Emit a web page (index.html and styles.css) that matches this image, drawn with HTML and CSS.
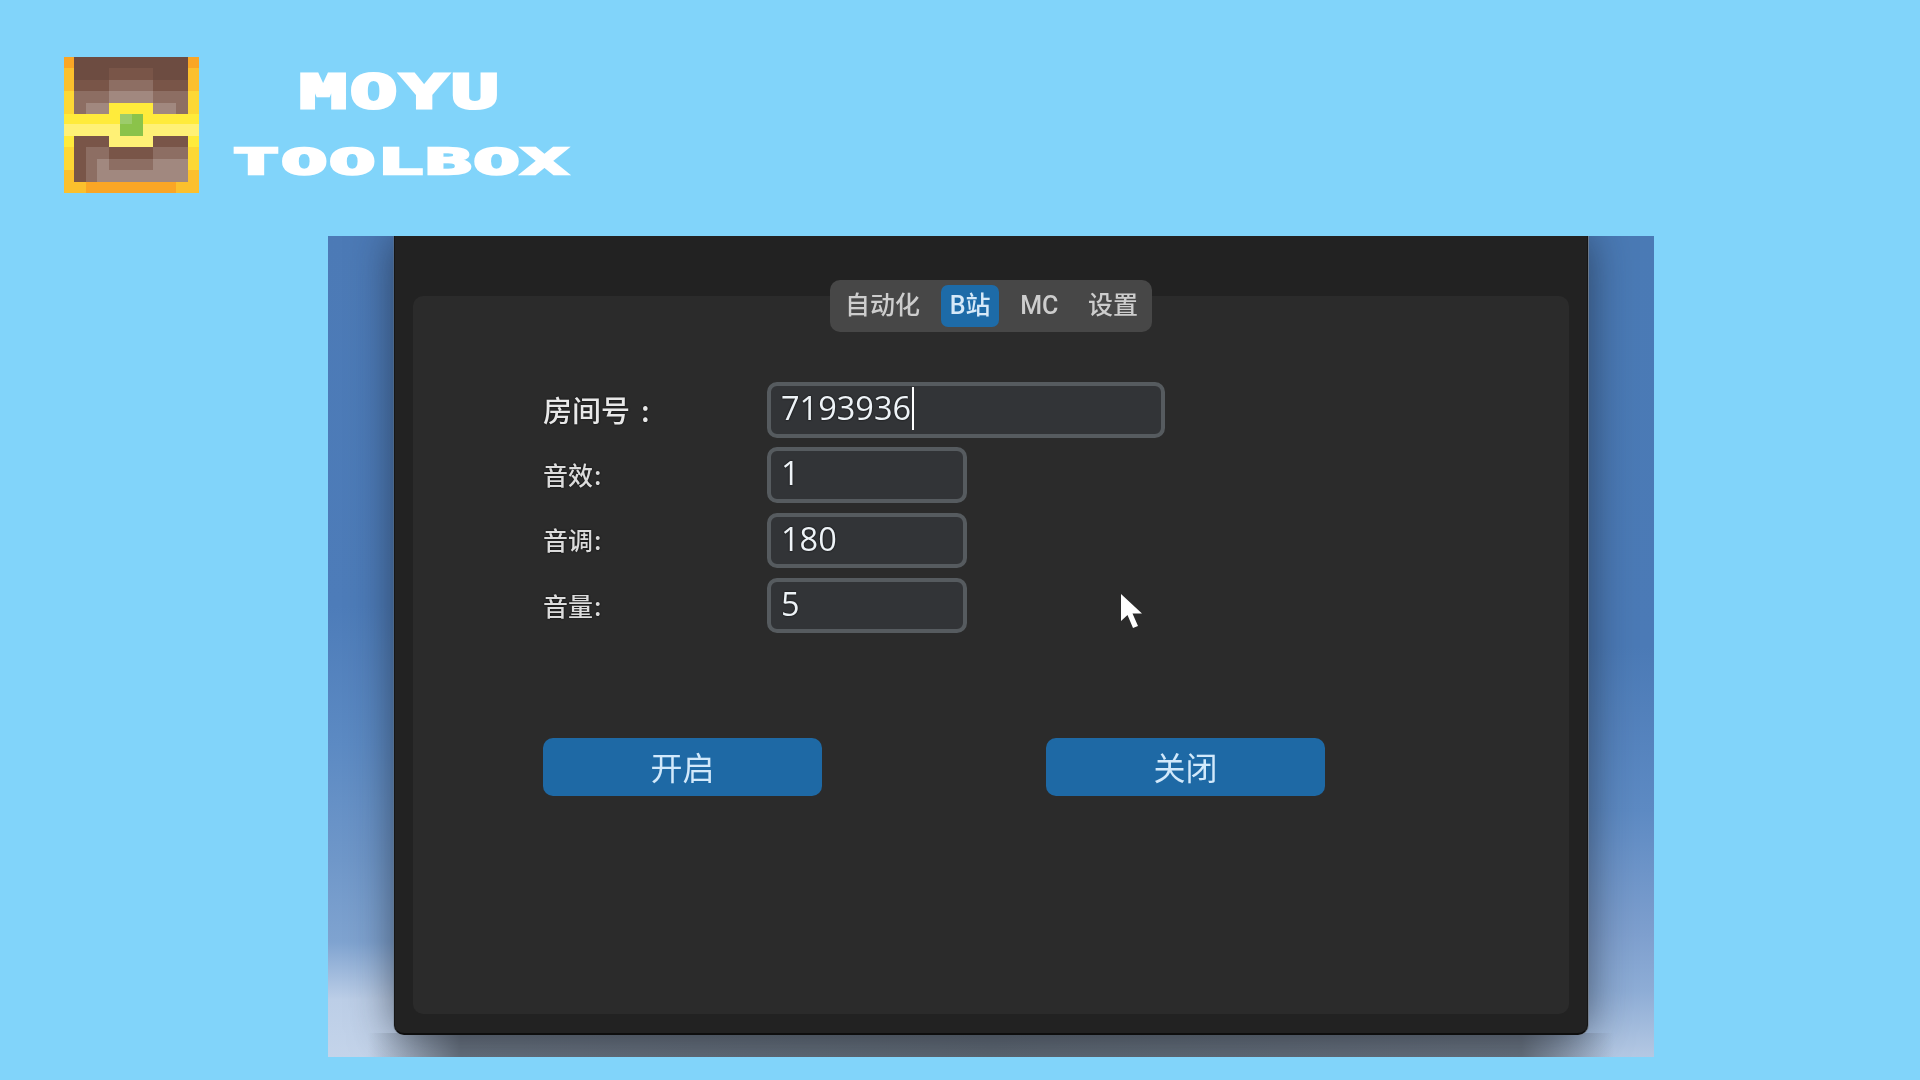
FILE: index.html
```html
<!DOCTYPE html>
<html lang="zh-CN">
<head>
<meta charset="utf-8">
<title>Moyu Toolbox</title>
<link rel="stylesheet" href="styles.css">
</head>
<body>
<header class="brand">
  <svg class="chest" viewBox="42 36 405 408" shape-rendering="crispEdges" aria-hidden="true">
    <rect x="42" y="36" width="405" height="408" fill="#fbc02d"/>
    <rect x="42" y="36" width="30" height="33" fill="#faa625"/><rect x="414" y="36" width="33" height="33" fill="#faa625"/>
    <rect x="42" y="138" width="405" height="237" fill="#fdd835"/>
    <rect x="108" y="411" width="270" height="33" fill="#faa625"/>
    <rect x="72" y="36" width="342" height="375" fill="#6d4c41"/>
    <rect x="177" y="69" width="132" height="36" fill="#795548"/>
    <rect x="72" y="105" width="342" height="33" fill="#795548"/>
    <rect x="177" y="105" width="132" height="33" fill="#8d6e63"/>
    <rect x="72" y="138" width="342" height="69" fill="#8d6e63"/>
    <rect x="177" y="138" width="132" height="36" fill="#a1887f"/>
    <rect x="108" y="174" width="69" height="33" fill="#a1887f"/>
    <rect x="309" y="174" width="69" height="33" fill="#a1887f"/>
    <rect x="177" y="174" width="132" height="33" fill="#ffeb3b"/>
    <rect x="42" y="207" width="405" height="30" fill="#ffeb3b"/>
    <rect x="42" y="237" width="405" height="36" fill="#fff176"/>
    <rect x="210" y="207" width="69" height="66" fill="#8bc34a"/>
    <rect x="210" y="207" width="36" height="30" fill="#9ccc6b"/>
    <rect x="42" y="273" width="30" height="33" fill="#ffeb3b"/><rect x="414" y="273" width="33" height="33" fill="#ffeb3b"/>
    <rect x="72" y="273" width="342" height="138" fill="#795548"/>
    <rect x="177" y="273" width="132" height="33" fill="#fff176"/>
    <rect x="108" y="306" width="306" height="105" fill="#a1887f"/>
    <rect x="108" y="306" width="69" height="36" fill="#8d6e63"/>
    <rect x="309" y="306" width="105" height="36" fill="#8d6e63"/>
    <rect x="177" y="306" width="132" height="36" fill="#795548"/>
    <rect x="108" y="342" width="33" height="69" fill="#8d6e63"/>
    <rect x="177" y="342" width="132" height="33" fill="#8d6e63"/>
  </svg>
  <div class="wordmark">
    <span class="word-moyu">MOYU</span>
    <span class="word-toolbox">TOOLBOX</span>
  </div>
</header>

<main class="shot">
  <section class="window">
    <nav class="tabs">
      <span class="tab">自动化</span>
      <span class="tab tab-active">B站</span>
      <span class="tab">MC</span>
      <span class="tab">设置</span>
    </nav>
    <div class="panel">
      <form class="form">
        <label class="label label-lg">房间号<span class="colon">:</span></label>
        <div class="field field-wide">7193936<i class="caret"></i></div>
        <label class="label">音效<span class="colon">:</span></label>
        <div class="field">1</div>
        <label class="label">音调<span class="colon">:</span></label>
        <div class="field">180</div>
        <label class="label">音量<span class="colon">:</span></label>
        <div class="field">5</div>
      </form>
      <div class="actions">
        <button class="btn" type="button">开启</button>
        <button class="btn" type="button">关闭</button>
      </div>
      <svg class="cursor" viewBox="0 0 23 35" aria-hidden="true">
        <path d="M1 0 L1 27 L7.5 21 L13 34 L18 32 L12.5 19.5 L22 19.5 Z" fill="#fff"/>
      </svg>
    </div>
  </section>
</main>
</body>
</html>
```

FILE: styles.css
```css
* { box-sizing: border-box; }

html, body { margin: 0; height: 100%; }

body {
  width: 1920px;
  height: 1080px;
  overflow: hidden;
  background: #81d4fa;
  font-family: "Open Sans", "Noto Sans CJK SC", sans-serif;
}

.brand {
  height: 236px;
  padding: 57px 0 0 64px;
  display: flex;
  align-items: flex-start;
  gap: 32px;
}

.chest { width: 135px; height: 136px; display: block; }

.wordmark {
  width: 340px;
  display: flex;
  flex-direction: column;
  align-items: center;
  color: #fff;
  font-family: "DejaVu Sans Mono", monospace;
  font-weight: 700;
  line-height: 1;
}

.word-moyu {
  font-size: 47px;
  height: 47px;
  margin-top: 11px;
  letter-spacing: 2px;
  transform: scaleX(1.67);
  -webkit-text-stroke: 3px #fff;
}

.word-toolbox {
  font-size: 36px;
  height: 36px;
  margin-top: 29px;
  letter-spacing: 1px;
  transform: scaleX(2.12);
  -webkit-text-stroke: 2.5px #fff;
}

.shot {
  width: 1326px;
  height: 821px;
  margin-left: 328px;
  padding: 0 66px 22px;
  overflow: hidden;
  background:
    linear-gradient(90deg, rgba(104,114,127,0) 3%, #68727f 10%, #5f6974 50%, #68727f 90%, rgba(104,114,127,0) 97%) bottom / 100% 24px no-repeat,
    linear-gradient(180deg, #4c7ab6 0, #4d7cb9 45%, #5c8ac3 62%, #6f97c9 76%, #7fa3d0 86%, #bccee7 93%, #c4d4ea 100%) left / 50% 100% no-repeat,
    linear-gradient(180deg, #4a7ab5 0, #4b7ab6 50%, #5d8ac3 70%, #7e9fce 85%, #8eadd6 92%, #b4c8e3 100%) right / 50% 100% no-repeat;
}

.window {
  height: 100%;
  padding: 44px 18px 19px;
  display: flex;
  flex-direction: column;
  align-items: center;
  background: #222;
  border: 1px solid #161616;
  border-top: 0;
  border-bottom: 2px solid #0e0e0e;
  border-radius: 0 0 10px 10px;
  box-shadow:
    1px 0 0 rgba(120, 128, 138, .8),
    -1px 0 0 rgba(110, 120, 130, .35),
    0 0 44px rgba(22, 28, 38, .62);
}

.tabs {
  position: relative;
  z-index: 1;
  display: flex;
  align-items: center;
  height: 52px;
  width: 322px;
  padding: 0 14px 0 15px;
  justify-content: space-between;
  background: #474747;
  border-radius: 10px;
  color: #cdcdcd;
  font-size: 25px;
  font-weight: 500;
  font-family: Roboto, "Noto Sans CJK SC", sans-serif;
  filter: blur(.4px);
}

.tab { line-height: 42px; white-space: nowrap; }

.tab-active {
  margin: 0 -9px;
  padding: 0 9px;
  height: 42px;
  background: #1d6ba8;
  border-radius: 7px;
  color: #d6e9f8;
}

.panel {
  position: relative;
  align-self: stretch;
  flex: 1;
  margin-top: -36px;
  padding: 86px 0 0 130px;
  background: #2b2b2b;
  border-radius: 10px;
}

.form {
  display: grid;
  grid-template-columns: 224px 200px;
  grid-auto-rows: 55.5px;
  row-gap: 9.8px;
  align-items: center;
  filter: blur(.4px);
}

.label {
  padding-bottom: 2px;
  color: #dcdcdc;
  font-size: 25px;
  font-weight: 500;
  font-family: "Noto Sans CJK SC", sans-serif;
  text-shadow: 0 0 2px #000;
}

.label-lg { font-size: 29px; color: #e8e8e8; }

.colon { margin-left: 1px; }

.label-lg .colon { margin-left: 11px; }

.field {
  position: relative;
  height: 55.5px;
  padding: 0 0 3px 10px;
  display: flex;
  align-items: center;
  background: #323437;
  border: 4px solid #565b5f;
  border-radius: 10px;
  color: #eef3f7;
  font-size: 32.5px;
  font-weight: 500;
  line-height: 1;
  text-shadow: 0 0 2px #000;
}

.field-wide { width: 398px; }

.caret {
  display: inline-block;
  width: 2px;
  height: 43px;
  margin-left: 1px;
  background: #fff;
}

.actions {
  display: flex;
  gap: 224px;
  margin-top: 104.6px;
  filter: blur(.4px);
}

.btn {
  width: 279px;
  height: 58px;
  padding: 0 0 2px;
  border: 0;
  border-radius: 10px;
  background: #1e69a5;
  color: #d2e9fb;
  font-size: 32px;
  font-family: "Noto Sans CJK SC", sans-serif;
}

.cursor {
  position: absolute;
  left: 707px;
  top: 298px;
  width: 23px;
  height: 35px;
}
```
